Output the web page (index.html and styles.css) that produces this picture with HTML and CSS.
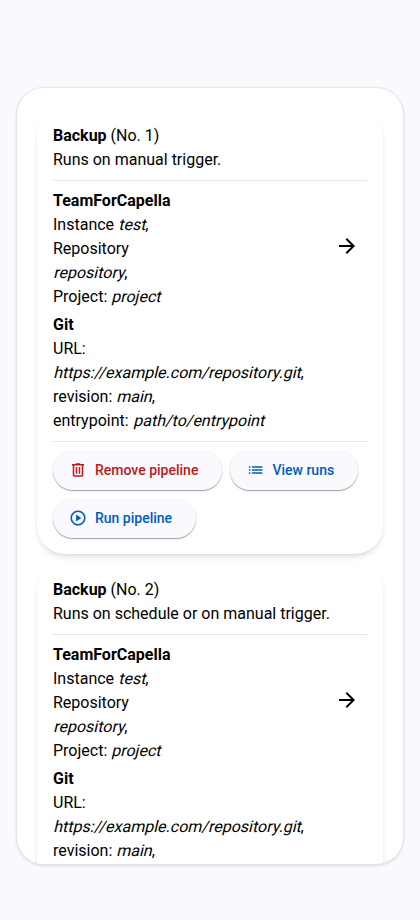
FILE: index.html
```html
<!DOCTYPE html>
<html lang="en">
<head>
<meta charset="utf-8">
<title>Pipelines</title>
<link rel="stylesheet" href="styles.css">
</head>
<body>
<main class="dialog">
  <div class="list">
    <article class="card">
      <header><b>Backup</b> (No. 1)<br>Runs on manual trigger.</header>
      <hr>
      <section class="flow">
        <div class="source"><b>TeamForCapella</b><br>Instance <i>test</i>,<br>Repository <i>repository</i>,<br>Project: <i>project</i></div>
        <svg class="arrow" viewBox="0 -960 960 960"><path d="M647-440H160v-80h487L423-744l57-56 320 320-320 320-57-56 224-224Z"/></svg>
      </section>
      <section class="git"><b>Git</b><br>URL: <i>https://example.com/repository.git</i>,<br>revision: <i>main</i>,<br>entrypoint: <i>path/to/entrypoint</i></section>
      <hr>
      <footer class="actions">
        <button class="btn danger"><svg viewBox="0 -960 960 960"><path d="M280-120q-33 0-56.500-23.500T200-200v-520h-40v-80h200v-40h240v40h200v80h-40v520q0 33-23.500 56.500T680-120H280Zm400-600H280v520h400v-520ZM360-280h80v-360h-80v360Zm160 0h80v-360h-80v360ZM280-720v520-520Z"/></svg>Remove pipeline</button>
        <button class="btn"><svg class="nudge" viewBox="0 -960 960 960"><path d="M280-600v-80h560v80H280Zm0 160v-80h560v80H280Zm0 160v-80h560v80H280ZM120-600v-80h80v80h-80Zm0 160v-80h80v80h-80Zm0 160v-80h80v80h-80Z"/></svg>View runs</button>
        <button class="btn"><svg viewBox="0 -960 960 960"><path d="m380-300 280-180-280-180v360ZM480-80q-83 0-156-31.500T197-197q-54-54-85.500-127T80-480q0-83 31.500-156T197-763q54-54 127-85.500T480-880q83 0 156 31.500T763-763q54 54 85.500 127T880-480q0 83-31.500 156T763-197q-54 54-127 85.500T480-80Zm0-80q134 0 227-93t93-227q0-134-93-227t-227-93q-134 0-227 93t-93 227q0 134 93 227t227 93Z"/></svg>Run pipeline</button>
      </footer>
    </article>
    <article class="card open">
      <header><b>Backup</b> (No. 2)<br>Runs on schedule or on manual trigger.</header>
      <hr>
      <section class="flow">
        <div class="source"><b>TeamForCapella</b><br>Instance <i>test</i>,<br>Repository <i>repository</i>,<br>Project: <i>project</i></div>
        <svg class="arrow" viewBox="0 -960 960 960"><path d="M647-440H160v-80h487L423-744l57-56 320 320-320 320-57-56 224-224Z"/></svg>
      </section>
      <section class="git"><b>Git</b><br>URL: <i>https://example.com/repository.git</i>,<br>revision: <i>main</i>,</section>
    </article>
  </div>
</main>
</body>
</html>
```

FILE: styles.css
```css
* { box-sizing: border-box; }
body {
  margin: 0;
  height: 920px;
  padding: 87px 16px 55px;
  background: #faf9fe;
  color: #000;
  font: 16px/24px Roboto, sans-serif;
  overflow: hidden;
}
.dialog {
  height: 778px;
  border: 1px solid #e5e7eb;
  border-radius: 28px;
  background: #fff;
  overflow: hidden;
  box-shadow: 0 1px 3px rgba(0, 0, 0, .1), 0 1px 2px -1px rgba(0, 0, 0, .1);
}
.list {
  display: flex;
  flex-direction: column;
  gap: 8px;
  padding: 20px;
}
.card {
  padding: 16px;
  border-radius: 28px;
  box-shadow: 0 4px 6px -1px rgba(0, 0, 0, .1), 0 2px 4px -2px rgba(0, 0, 0, .1);
}
.card.open { padding-bottom: 80px; }
b { font-weight: 700; }
i { display: inline-block; font-style: normal; transform: skewX(-13.500deg); transform-origin: 0 18px; }
hr { margin: 8px 0; border: 0; border-top: 1px solid #e5e5e7; }
.flow { display: flex; align-items: center; justify-content: space-between; margin-bottom: 4px; }
.source { width: 125px; }
.arrow { width: 24px; height: 24px; margin: 0 8px 6px 0; }
.git { width: 270px; }
.actions { display: flex; flex-wrap: wrap; gap: 8px; }
.btn {
  display: flex;
  align-items: center;
  gap: 8px;
  height: 40px;
  padding: 0 24px 0 16px;
  border: 0;
  border-radius: 20px;
  background: #faf9fe;
  color: #005cbb;
  font: 500 14px/20px Roboto, sans-serif;
  box-shadow: 0 1px 1px rgba(0, 0, 0, .3), 0 1px 2px rgba(0, 0, 0, .1);
}
.btn svg { width: 18px; height: 18px; fill: currentColor; }
.btn .nudge { transform: translateX(.6px); }
.danger { color: #ba1a1a; }
```
